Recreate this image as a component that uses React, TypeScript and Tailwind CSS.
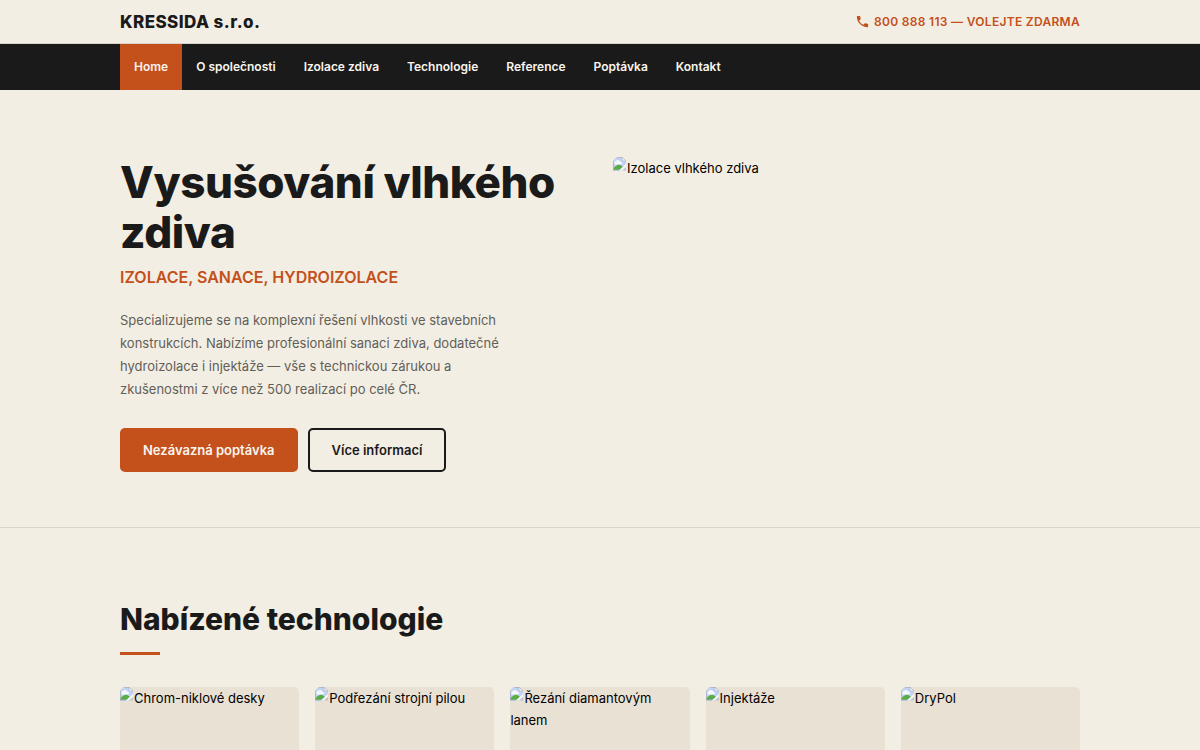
const navItems = [
  { label: 'Home', active: true },
  { label: 'O společnosti' },
  { label: 'Izolace zdiva' },
  { label: 'Technologie' },
  { label: 'Reference' },
  { label: 'Poptávka' },
  { label: 'Kontakt' },
];

const technologies = [
  'Chrom-niklové desky',
  'Podřezání strojní pilou',
  'Řezání diamantovým lanem',
  'Injektáže',
  'DryPol',
];

function PhoneIcon() {
  return (
    <svg viewBox="0 0 24 24" className="h-[15px] w-[15px]" fill="currentColor" aria-hidden="true">
      <path d="M6.62 10.79c1.44 2.83 3.76 5.14 6.59 6.59l2.2-2.2c.27-.27.67-.36 1.02-.24 1.12.37 2.33.57 3.57.57.55 0 1 .45 1 1V20c0 .55-.45 1-1 1-9.39 0-17-7.61-17-17 0-.55.45-1 1-1h3.5c.55 0 1 .45 1 1 0 1.25.2 2.45.57 3.57.11.35.03.74-.25 1.02l-2.2 2.2z" />
    </svg>
  );
}

// picture placeholder shown in front of the image description
function PlaceholderIcon() {
  return (
    <svg viewBox="0 0 14 14" className="inline-block h-[14px] w-[14px] rounded-tl-[6px] align-top" aria-hidden="true">
      <path d="M0 0h9l4 4v4l-5 6H0z" fill="#c3d3f5" />
      <path d="M2 7.500a2 2 0 0 1 1-3.500 2.300 2.300 0 0 1 4 .5A1.600 1.600 0 0 1 8 7.500z" fill="#f5f8ff" />
      <path d="M0 12c2-3 5-5 7.500-4L10 10l-4 3H0z" fill="#5aad45" />
      <path d="M0 .5h9M.5 0v13M0 13h6" stroke="#a9b0bd" strokeWidth=".8" fill="none" />
      <path d="M9 0v4h4z" fill="#edf1fa" stroke="#a9b0bd" strokeWidth=".6" />
      <path d="M13 7 6 13.500h2l5-4z" fill="#f8f8f6" />
      <path d="M13 10v3.500H9.500z" fill="#b8c4d4" />
    </svg>
  );
}

export default function App() {
  return (
    <div className="min-h-screen bg-[#f3eee3] font-['Inter',sans-serif] text-[13px] text-[#1a1a1a]">
      <header className="border-b border-[#d9d4c9]">
        <div className="mx-auto flex h-[43px] max-w-[960px] items-center justify-between">
          <a href="#" className="text-[17px] leading-7 font-extrabold tracking-wide">KRESSIDA s.r.o.</a>
          <a href="tel:800888113" className="flex items-center gap-1 text-xs font-semibold tracking-wide text-[#c4501b]">
            <PhoneIcon />
            800 888 113 — VOLEJTE ZDARMA
          </a>
        </div>
      </header>

      <nav className="bg-[#1a1a1a]">
        <ul className="mx-auto flex max-w-[960px]">
          {navItems.map((item) => (
            <li key={item.label}>
              <a
                href="#"
                className={`block px-[14px] text-xs leading-[46px] font-semibold text-[#f8f5ee] ${item.active ? 'bg-[#c4501b]' : ''}`}
              >
                {item.label}
              </a>
            </li>
          ))}
        </ul>
      </nav>

      <main>
        <section className="border-b border-[#d9d4c9]">
          <div className="mx-auto grid max-w-[960px] grid-cols-2 gap-[26px] pt-[67px] pb-[55px]">
            <div>
              <h1 className="text-[44px] leading-[50px] font-extrabold tracking-[-0.01em]">Vysušování vlhkého zdiva</h1>
              <p className="mt-2 text-base leading-6 font-semibold text-[#c4501b]">IZOLACE, SANACE, HYDROIZOLACE</p>
              <p className="mt-5 max-w-[400px] leading-[23px] text-[#625e58]">
                Specializujeme se na komplexní řešení vlhkosti ve stavebních konstrukcích. Nabízíme profesionální sanaci
                zdiva, dodatečné hydroizolace i injektáže — vše s technickou zárukou a zkušenostmi z více než 500
                realizací po celé ČR.
              </p>
              <div className="mt-[27px] flex gap-[10px]">
                <a href="#" className="rounded-[5px] bg-[#c4501b] px-[23px] leading-[44px] font-semibold text-[#f8f5ee]">
                  Nezávazná poptávka
                </a>
                <a href="#" className="rounded-[5px] border-2 border-[#1a1a1a] px-[22px] leading-10 font-semibold">
                  Více informací
                </a>
              </div>
            </div>
            <div className="leading-[22px] text-black">
              <PlaceholderIcon />Izolace vlhkého zdiva
            </div>
          </div>
        </section>

        <section className="mx-auto max-w-[960px] pt-[71px]">
          <h2 className="text-3xl leading-10 font-extrabold">Nabízené technologie</h2>
          <div className="mt-[13px] h-[3px] w-10 bg-[#c4501b]" />
          <div className="mt-8 grid grid-cols-5 gap-4">
            {technologies.map((name) => (
              <article key={name} className="h-[180px] rounded-[5px] bg-[#e9e1d4] leading-[22px] text-black">
                <PlaceholderIcon />{name}
              </article>
            ))}
          </div>
        </section>
      </main>
    </div>
  );
}
